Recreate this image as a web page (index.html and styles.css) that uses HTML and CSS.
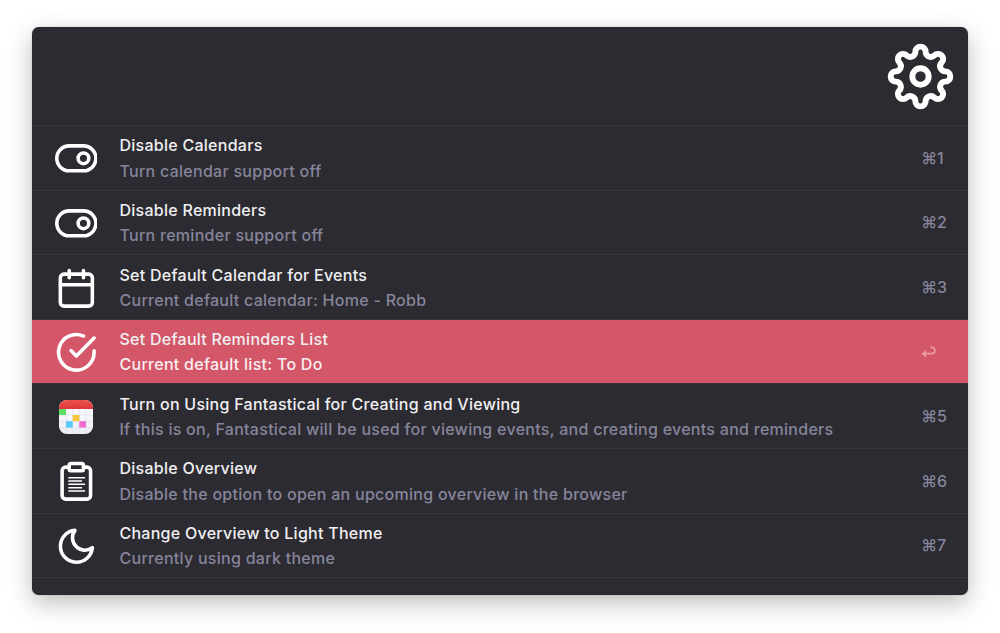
FILE: index.html
```html
<!DOCTYPE html>
<html lang="en">
<head>
<meta charset="utf-8">
<title>Settings</title>
<link rel="stylesheet" href="styles.css">
</head>
<body>
<main class="window">
  <header class="search">
    <svg class="gear" viewBox="-34 -34 68 68">
      <path d="M-5.2-25.1A5.2 5.2 0 0 1 5.2-25.1A5.2 5.2 0 0 0 14.07-21.43A5.2 5.2 0 0 1 21.43-14.07A5.2 5.2 0 0 0 25.1-5.2A5.2 5.2 0 0 1 25.1 5.2A5.2 5.2 0 0 0 21.43 14.07A5.2 5.2 0 0 1 14.07 21.43A5.2 5.2 0 0 0 5.2 25.1A5.2 5.2 0 0 1-5.2 25.1A5.2 5.2 0 0 0-14.07 21.43A5.2 5.2 0 0 1-21.43 14.07A5.2 5.2 0 0 0-25.1 5.2A5.2 5.2 0 0 1-25.1-5.2A5.2 5.2 0 0 0-21.43-14.07A5.2 5.2 0 0 1-14.07-21.43A5.2 5.2 0 0 0-5.2-25.1Z"/>
      <circle r="8.3"/>
    </svg>
  </header>
  <ul class="list">
    <li class="row">
      <svg class="icon" viewBox="0 0 24 24"><rect x="1" y="5" width="22" height="14" rx="7"/><circle cx="16" cy="12" r="3"/></svg>
      <div class="text"><div class="title">Disable Calendars</div><div class="sub">Turn calendar support off</div></div>
      <span class="key">⌘1</span>
    </li>
    <li class="row">
      <svg class="icon" viewBox="0 0 24 24"><rect x="1" y="5" width="22" height="14" rx="7"/><circle cx="16" cy="12" r="3"/></svg>
      <div class="text"><div class="title">Disable Reminders</div><div class="sub">Turn reminder support off</div></div>
      <span class="key">⌘2</span>
    </li>
    <li class="row">
      <svg class="icon" viewBox="0 0 24 24"><rect x="3" y="4" width="18" height="18" rx="2"/><path d="M16 2v4M8 2v4M3 10h18"/></svg>
      <div class="text"><div class="title">Set Default Calendar for Events</div><div class="sub">Current default calendar: Home - Robb</div></div>
      <span class="key">⌘3</span>
    </li>
    <li class="row selected">
      <svg class="icon" viewBox="0 0 24 24"><path d="M22 11.08V12a10 10 0 1 1-5.93-9.14"/><path d="M22 4 12 14.01l-3-3"/></svg>
      <div class="text"><div class="title">Set Default Reminders List</div><div class="sub">Current default list: To Do</div></div>
      <span class="key"><svg class="return" viewBox="0 0 16 12"><path d="M9.5 1.3h1.2a3.1 3.1 0 0 1 0 6.4H4"/><path class="head" d="M.6 7.7 5 4v7.4z"/></svg></span>
    </li>
    <li class="row">
      <svg class="app" viewBox="0 0 34 34">
        <defs>
          <clipPath id="tile"><rect width="34" height="34" rx="7.8"/></clipPath>
          <linearGradient id="paper" x2="0" y2="1"><stop stop-color="#fff"/><stop offset="1" stop-color="#eceef5"/></linearGradient>
          <linearGradient id="red" x2="0" y2="1"><stop stop-color="#f0524c"/><stop offset="1" stop-color="#d9373a"/></linearGradient>
        </defs>
        <g clip-path="url(#tile)">
          <rect width="34" height="34" fill="url(#paper)"/>
          <path class="grid" d="M7 9v25M13.7 9v25M20.3 9v25M27 9v25M0 15h34M0 21.2h34M0 27.6h34"/>
          <rect width="34" height="9" fill="url(#red)"/>
          <rect y="9" width="7" height="6" fill="#61dc67"/>
          <rect x="13.7" y="15" width="6.6" height="6.2" fill="#f9c437"/>
          <rect x="7" y="21.2" width="6.7" height="6.4" fill="#5bc9f7"/>
          <rect x="20.3" y="21.2" width="6.7" height="6.4" fill="#ed6ccb"/>
        </g>
      </svg>
      <div class="text"><div class="title">Turn on Using Fantastical for Creating and Viewing</div><div class="sub">If this is on, Fantastical will be used for viewing events, and creating events and reminders</div></div>
      <span class="key">⌘5</span>
    </li>
    <li class="row">
      <svg class="icon" viewBox="0 0 24 24"><path d="M16 4h2a2 2 0 0 1 2 2v14a2 2 0 0 1-2 2H6a2 2 0 0 1-2-2V6a2 2 0 0 1 2-2h2"/><rect x="8" y="2" width="8" height="4" rx="1"/><path class="thin" d="M7.5 10h9.4M7.5 11.85h7.7M7.5 13.7h9.4M7.5 15.55h7.7M7.5 17.4h9.4"/></svg>
      <div class="text"><div class="title">Disable Overview</div><div class="sub">Disable the option to open an upcoming overview in the browser</div></div>
      <span class="key">⌘6</span>
    </li>
    <li class="row">
      <svg class="icon" viewBox="0 0 24 24"><path d="M21 12.79A9 9 0 1 1 11.21 3 7 7 0 0 0 21 12.79z"/></svg>
      <div class="text"><div class="title">Change Overview to Light Theme</div><div class="sub">Currently using dark theme</div></div>
      <span class="key">⌘7</span>
    </li>
  </ul>
</main>
</body>
</html>
```
FILE: styles.css
```css
* { box-sizing: border-box; }
body {
  margin: 0;
  height: 633px;
  padding: 27px 32px 0;
  background: #fff;
  overflow: hidden;
  font-family: Inter, "Noto Sans", sans-serif;
}
.window {
  height: 568px;
  background: #2c2b31;
  border-radius: 7px;
  overflow: hidden;
  box-shadow: 0 0 1px rgba(0,0,0,.5), 0 8px 24px rgba(0,0,0,.26);
}
.search {
  height: 98px;
  display: flex;
  justify-content: flex-end;
  padding: 15.6px 14px 0 0;
}
.gear {
  width: 67px;
  height: 67px;
  fill: none;
  stroke: #fff;
  stroke-width: 6;
}
.list {
  list-style: none;
  margin: 0;
  padding: 0;
  border-bottom: 1px solid #37363d;
}
.row {
  height: 64.6px;
  display: flex;
  align-items: center;
  border-top: 1px solid #37363d;
  padding: 1.8px 0 0 22.5px;
  color: #f0f0f2;
}
.icon {
  width: 42.7px;
  height: 42.7px;
  flex: none;
  fill: none;
  stroke: #fff;
  stroke-width: 2;
  stroke-linecap: round;
  stroke-linejoin: round;
}
.icon .thin { stroke-width: .85; stroke-linecap: butt; }
.app { width: 34px; height: 34px; margin: 0 4.35px; flex: none; }
.grid { fill: none; stroke: #dfe3f0; stroke-width: .8; }
.text { flex: 1; margin-left: 22.3px; white-space: nowrap; }
.title, .sub { font-size: 16px; font-weight: 500; line-height: 25.3px; }
.title { letter-spacing: .265px; }
.sub { color: #86859b; letter-spacing: .275px; }
.key {
  width: 46.8px;
  padding-bottom: 1.6px;
  font-size: 16px;
  font-weight: 500;
  color: #86859b;
}
.selected { background: #d45769 padding-box; }
.selected .sub { color: #f8eef0; }
.selected .key { padding-bottom: 0; }
.return {
  display: block;
  width: 16px;
  height: 12px;
  fill: none;
  stroke: #e99aa6;
  stroke-width: 1.7;
}
.return .head { fill: #e99aa6; stroke: none; }
```
